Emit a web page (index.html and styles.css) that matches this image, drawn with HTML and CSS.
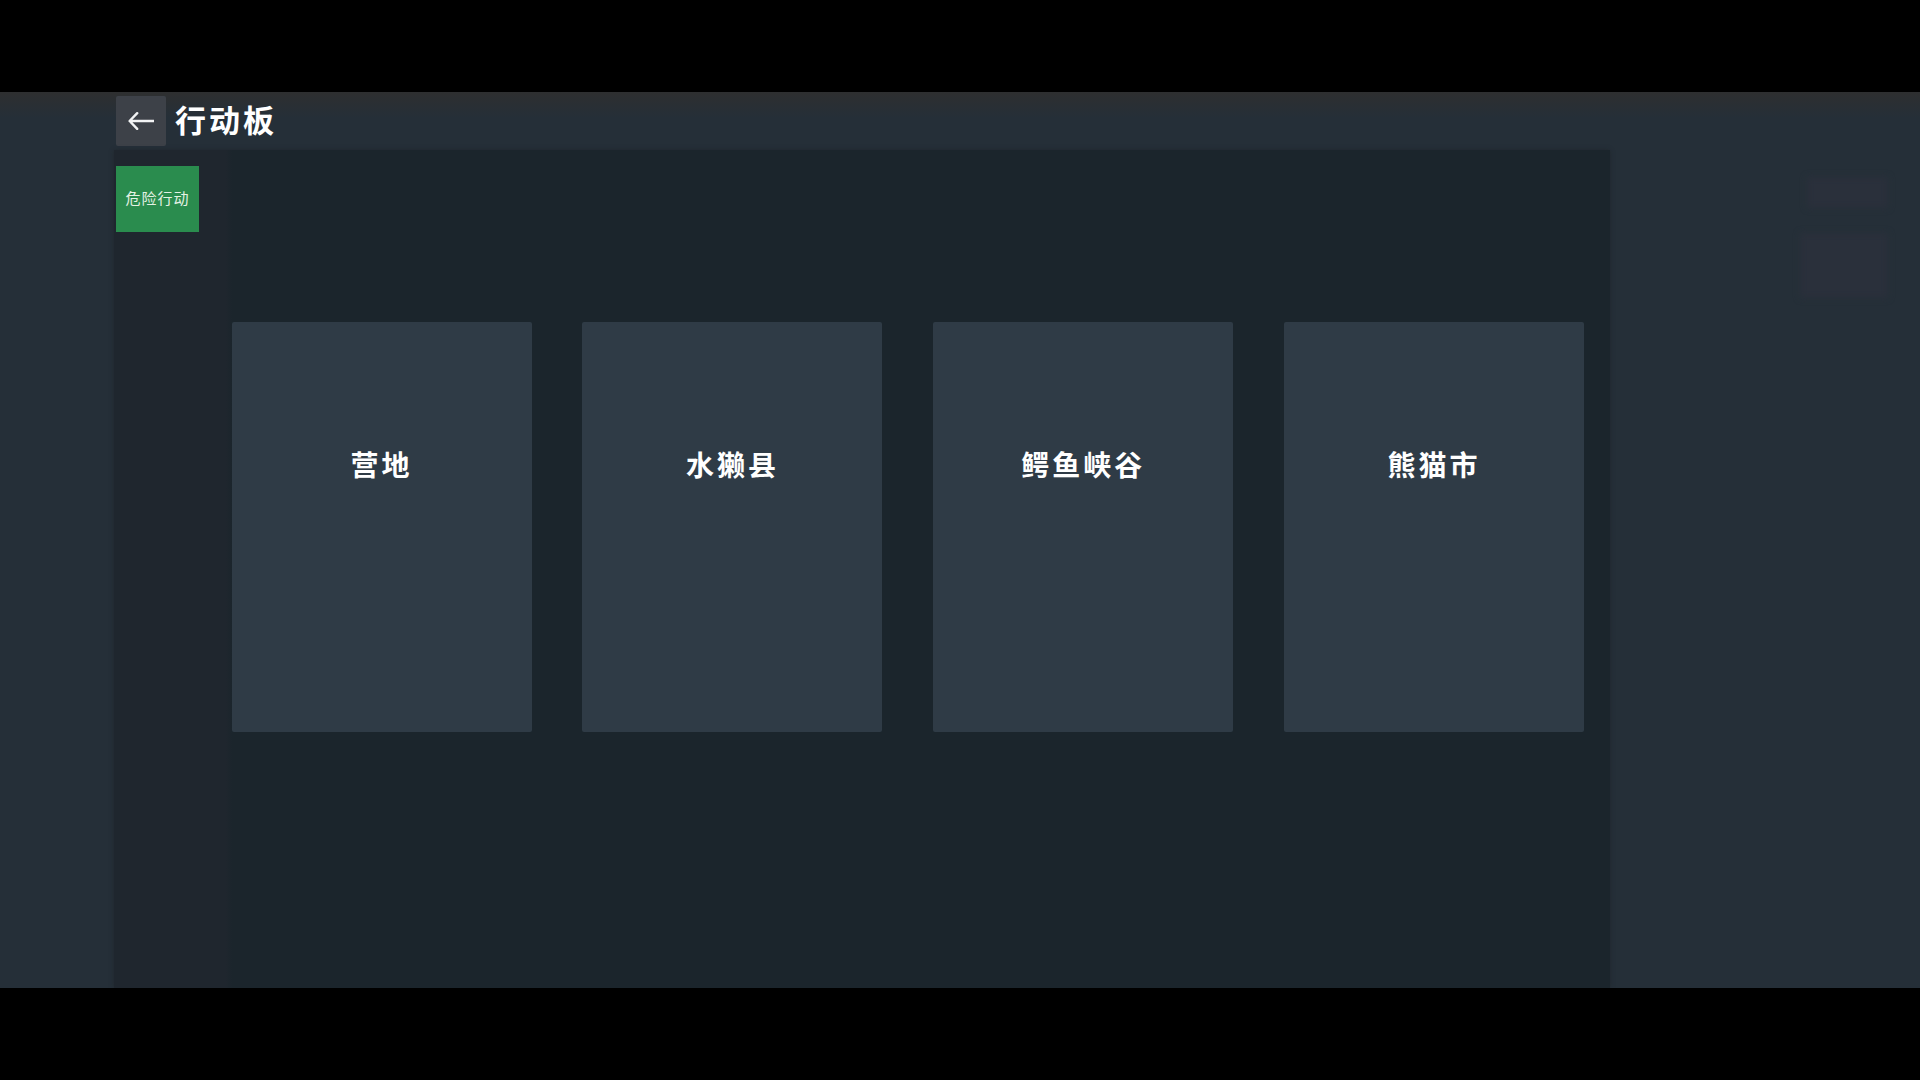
FILE: index.html
```html
<!DOCTYPE html>
<html lang="zh-CN">
<head>
<meta charset="utf-8">
<title>行动板</title>
<link rel="stylesheet" href="styles.css">
</head>
<body>
<div class="stage">
  <div class="ghost ghost-a"></div>
  <div class="ghost ghost-b"></div>
  <header class="topbar">
    <button class="back" type="button" aria-label="返回">
      <svg class="back-icon" viewBox="0 0 26 18" width="26" height="18" aria-hidden="true">
        <path d="M25.5 9H1.8M9.2 1.2 1.6 9l7.6 7.8" fill="none" stroke="#f2f3f4" stroke-width="2.4" stroke-linecap="round" stroke-linejoin="round"/>
      </svg>
    </button>
    <h1 class="title">行动板</h1>
  </header>
  <main class="panel">
    <div class="tabs">
      <button class="tab" type="button">危险行动</button>
    </div>
    <section class="cards">
      <article class="card"><h2 class="card-name">营地</h2></article>
      <article class="card"><h2 class="card-name">水獭县</h2></article>
      <article class="card"><h2 class="card-name">鳄鱼峡谷</h2></article>
      <article class="card"><h2 class="card-name">熊猫市</h2></article>
    </section>
  </main>
</div>
</body>
</html>
```

FILE: styles.css
```css
* { box-sizing: border-box; }

html, body {
  margin: 0;
  height: 100%;
  background: #000;
  overflow: hidden;
}

body {
  padding: 92px 0;
  font-family: "Liberation Sans", "Noto Sans CJK SC", sans-serif;
}

.stage {
  position: relative;
  height: 896px;
  display: flex;
  flex-direction: column;
  overflow: hidden;
  background: linear-gradient(180deg, #2e2f30 0, rgba(38, 46, 54, 0) 26px), #252f38;
}

.ghost {
  position: absolute;
  background: #2a303b;
  filter: blur(3px);
}

.ghost-a { left: 1807px; top: 85px; width: 81px; height: 31px; }
.ghost-b { left: 1800px; top: 141px; width: 88px; height: 65px; }

.topbar {
  flex: none;
  height: 58px;
  padding: 4px 0 0 116px;
  display: flex;
  align-items: flex-start;
  gap: 9px;
}

.back {
  width: 50px;
  height: 50px;
  padding: 0;
  border: 0;
  border-radius: 2px;
  background: #3d4148;
  display: flex;
  align-items: center;
  justify-content: center;
}

.title {
  margin: 0;
  line-height: 51px;
  font-size: 31px;
  font-weight: 700;
  letter-spacing: 3px;
  color: #fff;
}

.panel {
  flex: 1;
  margin-left: 114px;
  width: 1496px;
  padding: 16px 26px 0 2px;
  background: linear-gradient(90deg, #1f262e 0, #1f262e 112px, #1b252c 118px);
  box-shadow: 0 0 4px #20272d;
}

.tabs {
  display: flex;
}

.tab {
  width: 83px;
  height: 66px;
  padding: 0 0 3px;
  border: 0;
  background: #2a8c4e;
  color: #e4f2e4;
  font-family: inherit;
  font-size: 15px;
  letter-spacing: 1px;
}

.cards {
  margin: 90px 0 0 115.6px;
  display: flex;
  justify-content: space-between;
}

.card {
  width: 300px;
  height: 410px;
  padding-top: 127px;
  border-radius: 2px;
  background: #2f3b46;
  text-align: center;
}

.card-name {
  margin: 0;
  line-height: 36px;
  font-size: 28px;
  font-weight: 700;
  letter-spacing: 3px;
  color: #fff;
}
```
